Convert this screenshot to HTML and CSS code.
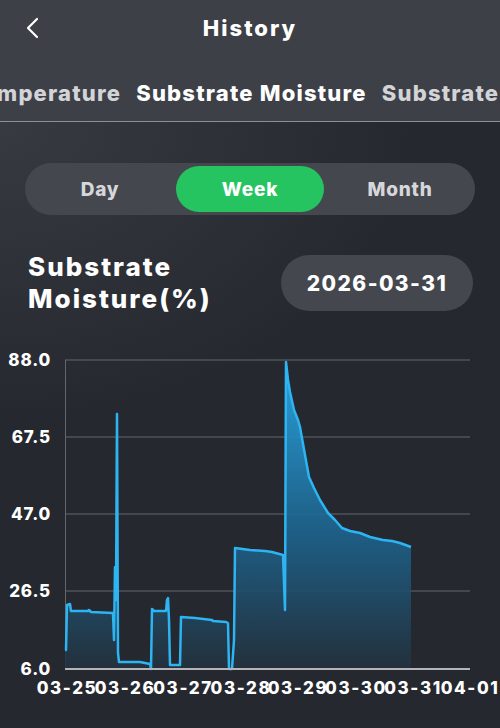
FILE: index.html
```html
<!DOCTYPE html>
<html lang="en">
<head>
  <meta charset="UTF-8">
  <title>History</title>
  <meta name="viewport" content="width=device-width, initial-scale=1.0">
  <link rel="stylesheet" href="styles.css">
</head>
<body>
  <div class="top">
    <header class="bar">
      <svg class="back" width="14" height="22" viewBox="0 0 14 22">
        <polyline points="11,2 2,11 11,20" fill="none" stroke="#fff" stroke-width="2.2" stroke-linecap="round" stroke-linejoin="round"/>
      </svg>
      <h1>History</h1>
    </header>
    <nav class="tabs">
      <span class="tab first">Temperature</span>
      <span class="tab active">Substrate Moisture</span>
      <span class="tab">Substrate EC</span>
    </nav>
  </div>

  <main class="main">
    <div class="seg">
      <span class="opt">Day</span>
      <span class="opt on">Week</span>
      <span class="opt">Month</span>
    </div>

    <div class="head-row">
      <h2>Substrate<br>Moisture(%)</h2>
      <span class="date">2026-03-31</span>
    </div>

    <svg class="chart" width="500" height="388" viewBox="0 340 500 388">
      <defs>
        <linearGradient id="fill" gradientUnits="userSpaceOnUse" x1="0" y1="360" x2="0" y2="669">
          <stop offset="0" stop-color="#2aa8e6" stop-opacity="0.95"/>
          <stop offset="0.55" stop-color="#1d6590" stop-opacity="0.9"/>
          <stop offset="1" stop-color="#23313d" stop-opacity="0.9"/>
        </linearGradient>
      </defs>
      <g class="grid">
        <line x1="65" y1="360" x2="470" y2="360"/>
        <line x1="65" y1="437" x2="470" y2="437"/>
        <line x1="65" y1="514" x2="470" y2="514"/>
        <line x1="65" y1="591" x2="470" y2="591"/>
        <line x1="65.5" y1="360" x2="65.5" y2="669"/>
      </g>
      <path class="area" d="M65,650 L66,650 L67,605 L70,604 L71,611 L88,611 L89,610 L91,612 L113,613 L114,640 L115,567 L116,600 L117,414 L118,653 L119,662 L140,662 L150,664 L151,669 L152,609 L154,611 L166,611 L167,600 L168,598 L169,620 L170,665 L180,665 L181,617 L195,618 L212,620 L213,621 L226,622 L228,623 L229,669 L232,669 L234,640 L235,548 L250,550 L265,551 L272,552 L283,555 L285,610 L286,362 L288,380 L290,392 L294,410 L298,420 L300,427 L305,455 L309,477 L314,488 L320,500 L328,513 L335,520 L342,528 L350,531 L360,533 L370,537 L383,540 L392,541 L400,543 L411,547 L411,669 L65,669 Z"/>
      <path class="line" d="M65,650 L66,650 L67,605 L70,604 L71,611 L88,611 L89,610 L91,612 L113,613 L114,640 L115,567 L116,600 L117,414 L118,653 L119,662 L140,662 L150,664 L151,669 L152,609 L154,611 L166,611 L167,600 L168,598 L169,620 L170,665 L180,665 L181,617 L195,618 L212,620 L213,621 L226,622 L228,623 L229,669 L232,669 L234,640 L235,548 L250,550 L265,551 L272,552 L283,555 L285,610 L286,362 L288,380 L290,392 L294,410 L298,420 L300,427 L305,455 L309,477 L314,488 L320,500 L328,513 L335,520 L342,528 L350,531 L360,533 L370,537 L383,540 L392,541 L400,543 L411,547"/>
      <line class="axis" x1="65" y1="669" x2="470" y2="669"/>
      <g class="ylab">
        <text x="51" y="366">88.0</text>
        <text x="51" y="443">67.5</text>
        <text x="51" y="520">47.0</text>
        <text x="51" y="597">26.5</text>
        <text x="51" y="675">6.0</text>
      </g>
      <g class="xlab">
        <text x="67" y="694">03-25</text>
        <text x="125" y="694">03-26</text>
        <text x="183" y="694">03-27</text>
        <text x="241" y="694">03-28</text>
        <text x="298" y="694">03-29</text>
        <text x="356" y="694">03-30</text>
        <text x="413" y="694">03-31</text>
        <text x="470" y="694">04-01</text>
      </g>
    </svg>
  </main>
</body>
</html>
```

FILE: styles.css
```css
* { box-sizing: border-box; }
body { margin: 0; width: 500px; height: 728px; overflow: hidden; background: #25282f; color: #fff; font-family: Inter, "Noto Sans", sans-serif; }

.top { background: #3e4047; }
.bar { height: 56px; position: relative; display: flex; align-items: center; justify-content: center; }
.bar h1 { margin: 0; font-size: 22px; font-weight: 800; letter-spacing: 2px; }
.back { position: absolute; left: 26px; top: 17px; }

.tabs { height: 66px; padding-top: 8px; display: flex; gap: 15px; align-items: center; white-space: nowrap; overflow: hidden; border-bottom: 1px solid #8d8f95; }
.tab { position: relative; font-size: 22px; font-weight: 800; color: #d3d4d8; letter-spacing: 1.2px; }
.tab.first { margin-left: -32px; }
.tab.active { color: #fff; }
.tab.active::after { content: ""; position: absolute; left: 11px; right: 11px; bottom: -20px; height: 2px; background: #fff; }

.main { height: 606px; background: radial-gradient(ellipse 420px 300px at 0 0, #383a41, #25282f); padding-top: 41px; }

.seg { margin: 0 25px; height: 52px; padding: 3px 0; display: grid; grid-template-columns: repeat(3, 1fr); background: #45474e; border-radius: 26px; }
.opt { margin: 0 1px; border-radius: 23px; display: flex; align-items: center; justify-content: center; font-size: 19px; font-weight: 800; color: #d6d7da; letter-spacing: 0.8px; }
.opt.on { background: #25c460; color: #fff; }

.head-row { margin-top: 37px; height: 62px; padding: 0 27px 0 28px; display: flex; align-items: center; justify-content: space-between; }
.head-row h2 { margin: 0; font-size: 26px; line-height: 32px; font-weight: 800; letter-spacing: 2px; }
.date { width: 192px; height: 56px; border-radius: 28px; background: #45474e; display: flex; align-items: center; justify-content: center; font-size: 21px; font-weight: 800; letter-spacing: 1.4px; }

.chart { display: block; margin-top: 26px; }
.grid line { stroke: #64666c; stroke-width: 1; }
.axis { stroke: #b4b5b9; stroke-width: 2; }
.area { fill: url(#fill); }
.line { fill: none; stroke: #2db4f2; stroke-width: 2.5; stroke-linejoin: round; }
.ylab text { fill: #fff; font-size: 17px; font-weight: 800; text-anchor: end; letter-spacing: 0.8px; }
.xlab text { fill: #fff; font-size: 17px; font-weight: 800; text-anchor: middle; letter-spacing: 1.6px; }
```
